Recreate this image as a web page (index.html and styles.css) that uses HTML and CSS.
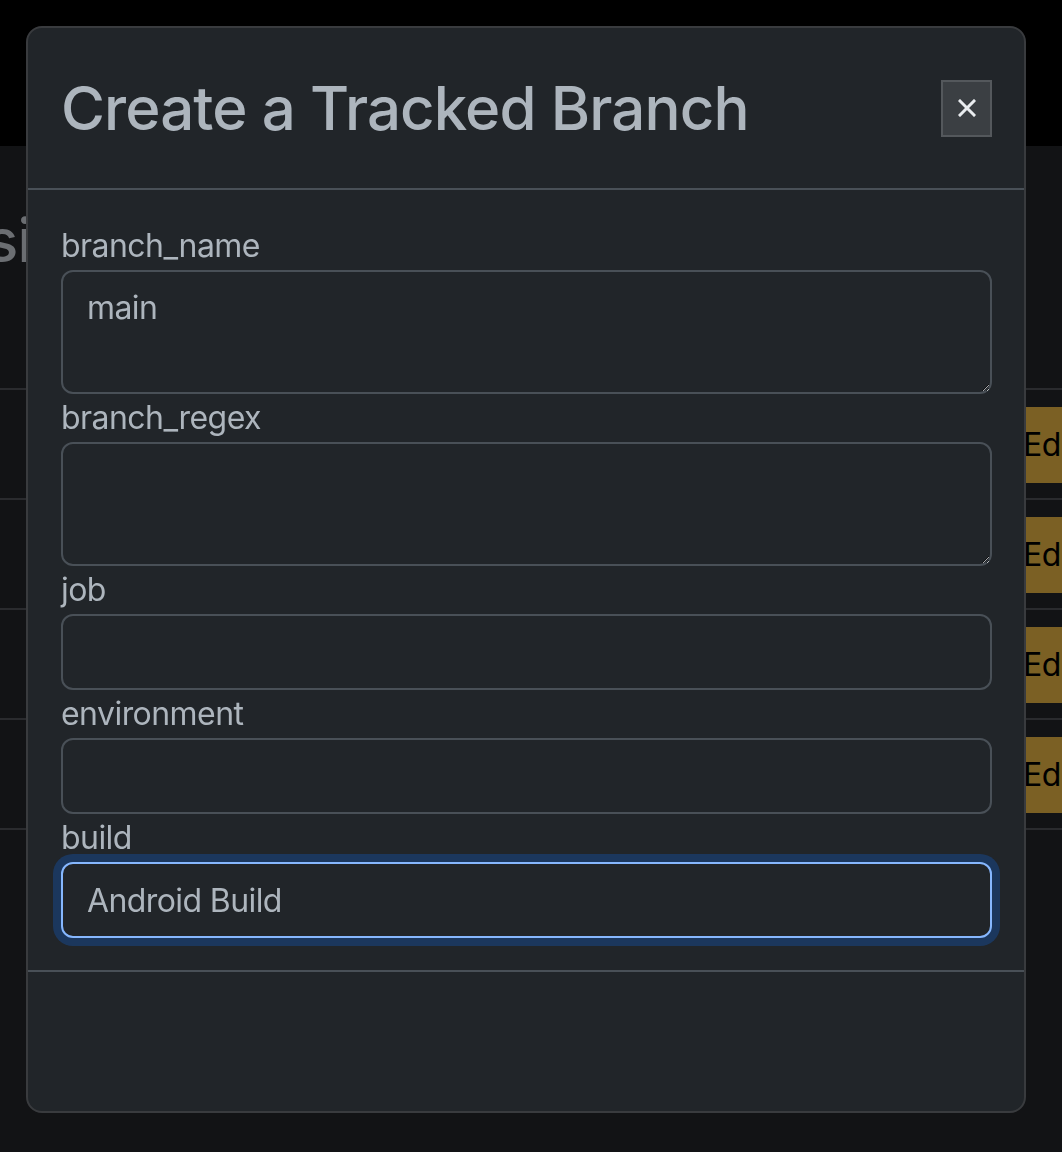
FILE: index.html
```html
<!DOCTYPE html>
<html lang="en">
<head>
<meta charset="utf-8">
<title>Create a Tracked Branch</title>
<link rel="stylesheet" href="styles.css">
</head>
<body>
<header class="navbar"></header>
<main class="page">
  <h2 class="page-title">sitory Branches</h2>
  <div class="table">
    <div class="row"><span class="cell"></span><button class="btn-edit">Edit</button></div>
    <div class="row"><span class="cell"></span><button class="btn-edit">Edit</button></div>
    <div class="row"><span class="cell"></span><button class="btn-edit">Edit</button></div>
    <div class="row"><span class="cell"></span><button class="btn-edit">Edit</button></div>
  </div>
</main>

<div class="modal">
  <div class="modal-header">
    <h1 class="modal-title">Create a Tracked Branch</h1>
    <button class="btn-close" aria-label="Close">
      <svg width="18" height="18" viewBox="0 0 18 18"><path d="M2 2 L16 16 M16 2 L2 16" stroke="#e9ecef" stroke-width="3" stroke-linecap="square"/></svg>
    </button>
  </div>
  <div class="modal-body">
    <label class="form-label">branch_name</label>
    <textarea class="form-control" rows="2">main</textarea>
    <label class="form-label">branch_regex</label>
    <textarea class="form-control" rows="2"></textarea>
    <label class="form-label">job</label>
    <input class="form-control" type="text" value="">
    <label class="form-label">environment</label>
    <input class="form-control" type="text" value="">
    <label class="form-label">build</label>
    <input class="form-control focused" type="text" value="Android Build">
  </div>
  <div class="modal-footer"></div>
</div>
</body>
</html>
```
FILE: styles.css
```css
* { box-sizing: border-box; }
html, body { margin: 0; padding: 0; }
body {
  background: #121315;
  font-family: Inter, "Noto Sans", sans-serif;
  color: #adb5bd;
  overflow: hidden;
  width: 1062px;
  height: 1152px;
}
.navbar { height: 146px; background: #000; }
.page { padding-top: 57px; }
.page-title {
  margin: 0 0 111px -14px;
  font-size: 60px;
  line-height: 74px;
  font-weight: 500;
  letter-spacing: -0.9px;
  color: #6b6e72;
  white-space: nowrap;
}
.table { border-bottom: 2px solid #2a2b2e; }
.row {
  display: flex;
  align-items: center;
  height: 110px;
  border-top: 2px solid #2a2b2e;
  padding-top: 1px;
}
.cell { width: 999px; flex: none; }
.btn-edit {
  flex: none;
  height: 76px;
  padding: 0 24px;
  border: none;
  border-radius: 12px;
  background: #7b6024;
  color: #000;
  font-family: Inter, "Noto Sans", sans-serif;
  font-size: 32px;
  letter-spacing: -0.6px;
}
.modal {
  position: fixed;
  left: 26px;
  top: 26px;
  width: 1000px;
  height: 1087px;
  background: #212529;
  border: 2px solid #393b3e;
  border-radius: 16px;
  display: flex;
  flex-direction: column;
}
.modal-header {
  display: flex;
  align-items: center;
  justify-content: space-between;
  height: 162px;
  padding: 32px 32px 32px 33px;
  border-bottom: 2px solid #495057;
}
.modal-title {
  margin: 0;
  font-size: 60px;
  line-height: 77px;
  font-weight: 500;
  letter-spacing: -0.9px;
  color: #adb5bd;
}
.btn-close {
  width: 51px;
  height: 57px;
  padding: 0;
  background: #3b3f43;
  border: 2px solid #54585c;
  border-radius: 0;
  display: flex;
  align-items: center;
  justify-content: center;
}
.btn-close svg { display: block; }
.modal-body {
  padding: 32px 32px 32px 33px;
  display: flex;
  flex-direction: column;
  border-bottom: 2px solid #495057;
}
.form-label {
  font-size: 32px;
  line-height: 48px;
  letter-spacing: -0.55px;
  color: #adb5bd;
}
.form-control {
  display: block;
  width: 100%;
  font-family: Inter, "Noto Sans", sans-serif;
  font-size: 32px;
  line-height: 48px;
  letter-spacing: -0.6px;
  color: #adb5bd;
  background: #212529;
  border: 2px solid #495057;
  border-radius: 12px;
  padding: 12px 24px;
  outline: none;
  margin: 0;
  color-scheme: dark;
}
textarea.form-control { height: 124px; resize: vertical; }
input.form-control { height: 76px; }
.form-control.focused {
  border-color: #86b7fe;
  box-shadow: 0 0 0 8px rgba(13, 110, 253, 0.25);
}
.modal-footer { flex: 1; }
```
